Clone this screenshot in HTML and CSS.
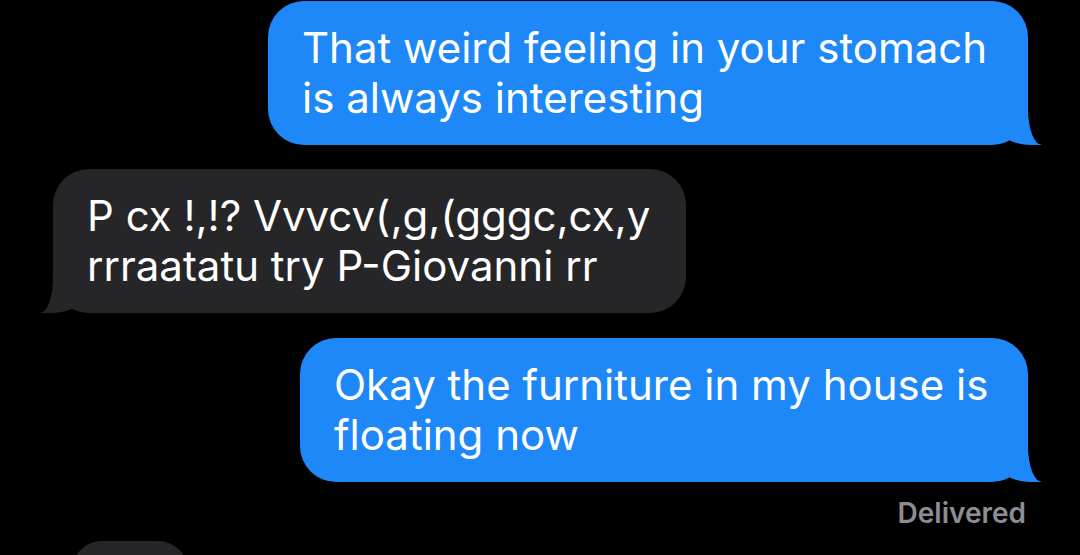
FILE: index.html
```html
<!DOCTYPE html>
<html lang="en">
  <head>
    <meta charset="UTF-8" />
    <meta name="viewport" content="width=device-width, initial-scale=1.0" />
    <title>Messages</title>
    <link rel="stylesheet" href="styles.css">
  </head>
  <body>
    <!-- conversation -->
    <div class="thread">
      <div class="msg msg-sent msg-w1">That weird feeling in your stomach<br>is always interesting</div>
      <div class="msg msg-recv msg-w2">P cx !,!? Vvvcv(,g,(gggc,cx,y<br>rrraatatu try P-Giovanni rr</div>
      <div class="msg msg-sent msg-w3">Okay the furniture in my house is<br>floating now</div>
      <div class="status">Delivered</div>
      <!-- next bubble, cut off at the bottom -->
      <div class="typing"></div>
    </div>
  </body>
</html>
```

FILE: styles.css
```css
body {
  margin: 0;
  background-color: #000;
  overflow: hidden;
  font-family: "Inter", "Liberation Sans", sans-serif;
}

.thread {
  display: flex;
  flex-direction: column;
  height: 100vh;
  padding-top: 1px;
  box-sizing: border-box;
  overflow: hidden;
}

/* message bubble */
.msg {
  position: relative;
  flex-shrink: 0;
  box-sizing: border-box;
  padding: 22px 34px;
  border-radius: 36px;
  font-size: 42px;
  line-height: 50px;
  color: #fff;
  white-space: nowrap;
}

.msg::before,
.msg::after {
  content: "";
  position: absolute;
  bottom: 0;
  height: 36px;
}

/* sent = blue, on the right */
.msg-sent {
  align-self: flex-end;
  margin-right: 52px;
  background-color: #1e88f8;
}
.msg-sent::before {
  right: -14px;
  width: 40px;
  background-color: #1e88f8;
  border-bottom-left-radius: 30px 14px;
}
.msg-sent::after {
  right: -30px;
  width: 30px;
  background-color: #000;
  border-bottom-left-radius: 14px 36px;
}

/* received = gray, on the left */
.msg-recv {
  align-self: flex-start;
  margin-left: 53px;
  background-color: #262628;
}
.msg-recv::before {
  left: -13px;
  width: 40px;
  background-color: #262628;
  border-bottom-right-radius: 30px 14px;
}
.msg-recv::after {
  left: -30px;
  width: 30px;
  background-color: #000;
  border-bottom-right-radius: 13px 36px;
}

.msg-w1 {
  width: 760px;
}
.msg-w2 {
  width: 633px;
}
.msg-w3 {
  width: 728px;
}

.msg + .msg {
  margin-top: 24px;
}
.msg-recv + .msg {
  margin-top: 25px;
}

.status {
  align-self: flex-end;
  flex-shrink: 0;
  margin: 15px 54px 0 0;
  font-size: 28px;
  line-height: 32px;
  font-weight: 600;
  color: #8d8d93;
}

.typing {
  flex-shrink: 0;
  margin: 12px 0 0 72px;
  width: 116px;
  height: 60px;
  border-radius: 36px;
  background-color: #262628;
}
```
